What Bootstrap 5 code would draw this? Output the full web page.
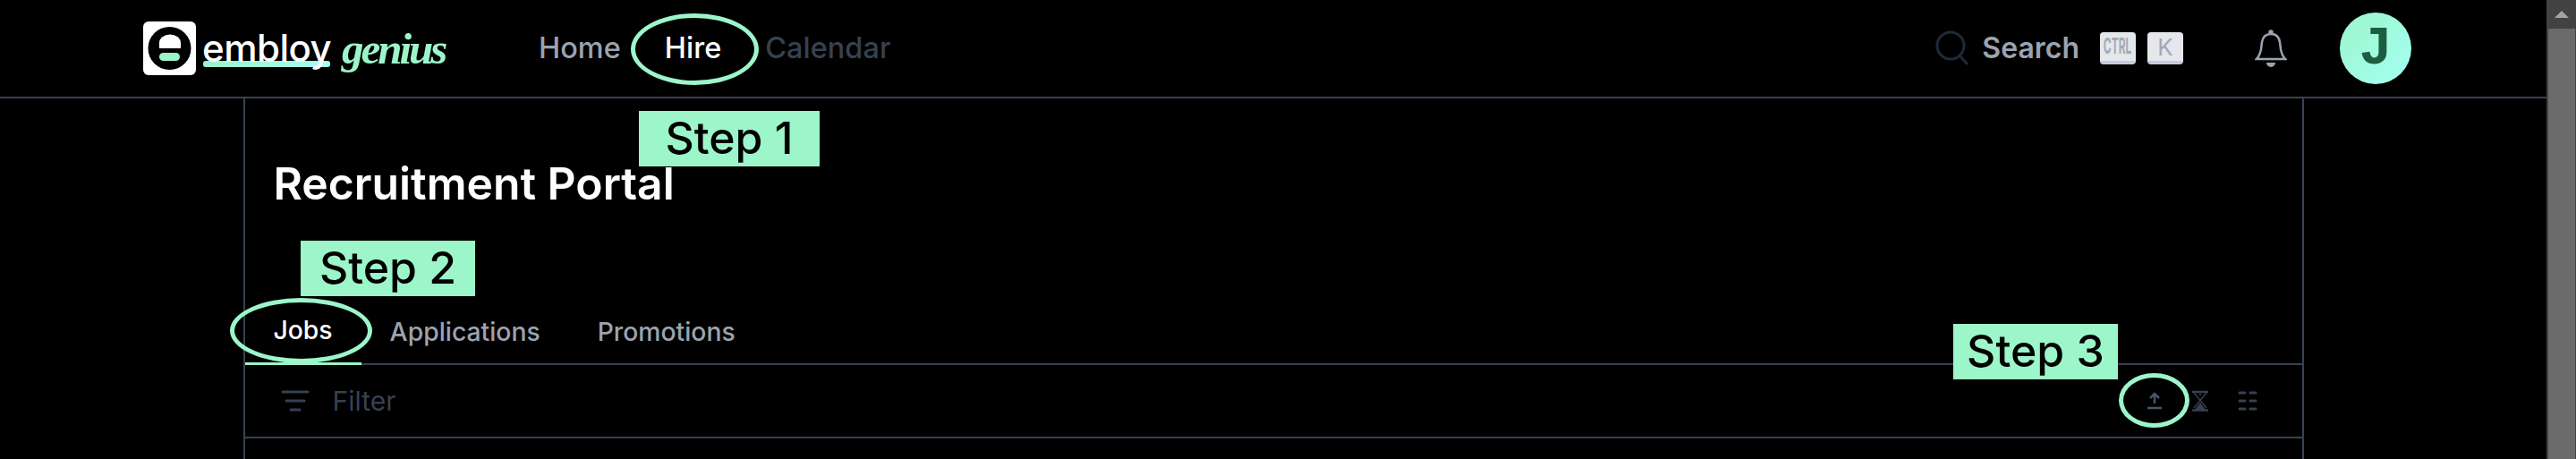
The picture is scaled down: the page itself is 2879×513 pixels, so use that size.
<!DOCTYPE html>
<html lang="en">
<head>
    <meta charset="UTF-8">
    <meta name="viewport" content="width=device-width, initial-scale=1.0">
    <title>embloy genius</title>
    <link rel="stylesheet" href="https://cdn.jsdelivr.net/npm/bootstrap@5.3.0/dist/css/bootstrap.min.css">
    <style>
        html, body { height: 100%; overflow: hidden; }
        body { background: #000; font-family: "Inter", "Noto Sans", sans-serif; }
        .top-bar { height: 110px; border-bottom: 2px solid #374151; padding: 0 151px 0 160px; }
        .logo-box { width: 59px; height: 60px; flex: none; }
        .word-mark { position: relative; isolation: isolate; color: #fff; font-size: 42px; font-weight: 500; line-height: 1; margin-left: 7px; width: 144px; letter-spacing: -.5px; }
        .word-mark::after { content: ""; position: absolute; z-index: -1; left: 1px; right: 1px; top: 35px; height: 7px; border-radius: 3px; background: linear-gradient(90deg, #9cf6c9, #a5fff5); }
        .genius-mark { color: #9cf6c9; font-family: "Liberation Serif", serif; font-style: italic; font-weight: 700; font-size: 49px; line-height: 1; margin-left: 12px; width: 115px; letter-spacing: -3px; }
        .top-links { margin-left: 105px; gap: 49px; font-size: 32.500px; font-weight: 500; }
        .link-grey { color: #9ca3af; }
        .link-dim { color: #374151; }
        .search-text { font-size: 32px; font-weight: 600; color: #9ca3af; margin: 0 23px 0 14px; }
        .key-cap { width: 40px; height: 36px; border-radius: 4px; background: #e5e7eb; border-bottom: 4px solid #c9c9e4; color: #a3a9b8; display: flex; align-items: center; justify-content: center; }
        .key-ctrl { font-size: 24px; font-weight: 700; margin-right: 13px; }
        .key-ctrl span { flex: none; transform: scaleX(.5); }
        .key-k { font-size: 26px; }
        .bell-icon { margin-left: 80px; }
        .avatar-dot { width: 80px; height: 80px; margin-left: 59px; background: linear-gradient(135deg, #9cf6c9, #a5fff5); color: #1b5e42; font-family: "Liberation Mono", monospace; font-size: 62px; font-weight: 700; }
        .portal-frame { width: 2303px; height: 403px; border-left: 2px solid #374151; border-right: 2px solid #374151; }
        .portal-title { color: #fff; font-size: 49.800px; font-weight: 600; line-height: 1; padding: 71px 0 0 32px; margin: 0; height: 156px; }
        .tab-row { height: 142px; border-bottom: 2px solid #374151; font-size: 28.300px; font-weight: 500; }
        .tab-item { padding: 68px 32px 0; height: 142px; line-height: 1; display: flex; align-items: center; }
        .tab-on { color: #fff; border-bottom: 3px solid #9cf6c9; }
        .tab-off { color: #9ca3af; }
        .filter-row { height: 82px; border-bottom: 2px solid #374151; padding: 0 50px 0 40px; color: #374151; font-size: 30px; }
        .filter-label { margin-left: 26px; }
        .act-gap { margin-left: 33px; }
        .scroll-rail { width: 33px; flex: none; background: #424242; padding: 0 1px 0 2px; }
        .scroll-top { height: 32px; }
        .scroll-thumb { height: 481px; background: #6b6b6b; }
        .stage { position: relative; min-width: 0; }
        .step-tag { position: absolute; height: 62px; background: #9cf6c9; color: #000; font-size: 50px; font-weight: 500; line-height: 60px; text-align: center; }
        .ring-mark { position: absolute; border: 5px solid #9cf6c9; border-radius: 50%; }
    </style>
</head>
<body>
<div class="d-flex h-100">
    <div class="stage flex-grow-1">
        <nav class="top-bar d-flex align-items-center">
            <svg class="logo-box" viewBox="0 0 59 60">
                <rect width="59" height="60" rx="6" fill="#fff"/>
                <circle cx="29.5" cy="30" r="24" fill="#000"/>
                <path d="M18 30 V24 a12 9.500 0 0 1 24 0 V30 Z" fill="#fff"/>
                <rect x="18" y="35" width="23" height="9" rx="4.500" fill="#9cf6c9"/>
            </svg>
            <span class="word-mark">embloy</span>
            <span class="genius-mark">genius</span>
            <div class="top-links d-flex">
                <span class="link-grey">Home</span>
                <span class="text-white">Hire</span>
                <span class="link-dim">Calendar</span>
            </div>
            <div class="ms-auto d-flex align-items-center">
                <svg width="38" height="40" viewBox="0 0 38 40" fill="none" stroke="#1f2937" stroke-width="3">
                    <circle cx="17" cy="17" r="15"/>
                    <path d="M27 28 L36 38"/>
                </svg>
                <span class="search-text">Search</span>
                <span class="key-cap key-ctrl"><span>CTRL</span></span>
                <span class="key-cap key-k">K</span>
                <svg class="bell-icon" width="36" height="42" viewBox="0 0 36 42" fill="none" stroke="#9ca3af" stroke-width="2.500">
                    <path d="M2 33 C8 27 7 20 8 14 C9 8 13 5 18 5 C23 5 27 8 28 14 C29 20 28 27 34 33 Z"/>
                    <circle cx="18" cy="3" r="1.500" fill="#9ca3af"/>
                    <path d="M13 37 H23 A5 5 0 0 1 13 37 Z" fill="#9ca3af" stroke="none"/>
                </svg>
                <span class="avatar-dot rounded-circle d-flex align-items-center justify-content-center">J</span>
            </div>
        </nav>
        <main class="portal-frame mx-auto">
            <h1 class="portal-title">Recruitment Portal</h1>
            <div class="tab-row d-flex">
                <span class="tab-item tab-on">Jobs</span>
                <span class="tab-item tab-off">Applications</span>
                <span class="tab-item tab-off">Promotions</span>
            </div>
            <div class="filter-row d-flex align-items-center">
                <svg width="32" height="26" viewBox="0 0 32 26" stroke="#374151" stroke-width="3" stroke-linecap="round">
                    <path d="M2 3 H30 M6 13 H26 M11 23 H21"/>
                </svg>
                <span class="filter-label">Filter</span>
                <div class="ms-auto d-flex align-items-center">
                    <svg width="18" height="20" viewBox="0 0 18 20" fill="none" stroke="#4b5563" stroke-width="2.500">
                        <path d="M9 13 V2 M4 7 L9 2 L14 7 M1 18 H17"/>
                    </svg>
                    <svg class="act-gap" width="18" height="24" viewBox="0 0 18 24" fill="#374151" stroke="#374151">
                        <path d="M0 2 H18 M0 22.500 H18" fill="none" stroke-width="2.500"/>
                        <path d="M2 3 L16 20 M16 3 L2 20" fill="none" stroke-width="1.500"/>
                        <path d="M9 14 L15 22 H3 Z M7 4 H11 L9 6 Z" stroke="none"/>
                    </svg>
                    <svg class="act-gap" width="22" height="22" viewBox="0 0 22 22" stroke="#374151" stroke-width="3" stroke-linecap="round">
                        <path d="M2 2 H8 M14 2 H20 M2 11 H8 M14 11 H20 M2 20 H8 M14 20 H20"/>
                    </svg>
                </div>
            </div>
        </main>

        <span class="ring-mark" style="left:705px;top:15px;width:143px;height:80px"></span>
        <span class="ring-mark" style="left:257px;top:333px;width:159px;height:73px"></span>
        <span class="ring-mark" style="left:2368px;top:417px;width:79px;height:61px"></span>
        <span class="step-tag" style="left:714px;top:124px;width:202px">Step 1</span>
        <span class="step-tag" style="left:336px;top:269px;width:195px">Step 2</span>
        <span class="step-tag" style="left:2183px;top:362px;width:184px">Step 3</span>
    </div>
    <div class="scroll-rail">
        <div class="scroll-top d-flex justify-content-center pt-2">
            <svg class="mt-1" width="16" height="8" viewBox="0 0 16 8"><path d="M8 0 L16 8 H0 Z" fill="#a3a3a3"/></svg>
        </div>
        <div class="scroll-thumb"></div>
    </div>
</div>
<script src="https://cdn.jsdelivr.net/npm/bootstrap@5.3.0/dist/js/bootstrap.bundle.min.js"></script>
</body>
</html>
